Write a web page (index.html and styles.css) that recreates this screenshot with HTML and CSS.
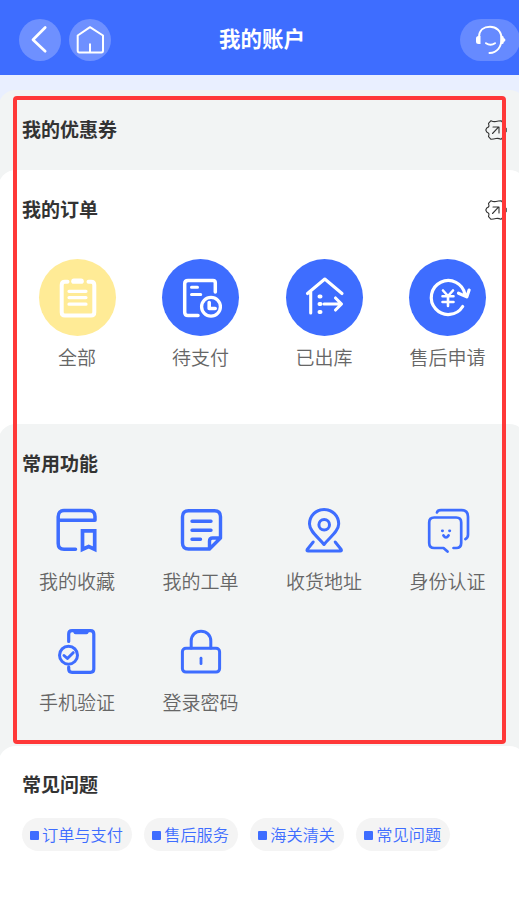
FILE: index.html
```html
<!DOCTYPE html>
<html lang="zh-CN">
<head>
<meta charset="utf-8">
<title>我的账户</title>
<link rel="stylesheet" href="styles.css">
</head>
<body>
<header class="topbar">
  <div class="nav">
    <a class="round"><svg width="42" height="42" viewBox="0 0 42 42"><path d="M26.2 8.5 14 20.8 26.2 32.2" stroke-width="2.7"/></svg></a>
    <a class="round"><svg width="42" height="42" viewBox="0 0 42 42"><path d="M8.700 16.500 21 8.200 34 16.500V31.800q0 1.600-1.600 1.600H10.300Q8.700 33.400 8.700 31.800ZM21 25.200v8" stroke-width="2"/></svg></a>
  </div>
  <h1>我的账户</h1>
  <a class="service"><svg width="60" height="42" viewBox="0 0 60 42"><path d="M19 18C19 11 24 7.800 30 7.800S41.500 12 41.500 19.500C41.500 28 37 33.500 29.500 34M26 24.200q4.500 3.200 9 0" stroke-width="2"/><path class="solid" d="M20.500 17v8h-2q-2.500 0-2.500-2.500v-3Q16 17 18.500 17ZM40.500 17v8h2q1.200 0 1.400-2.200 1.500-.3 1.500-1.800t-1.500-1.800Q43.700 17 42.500 17Z"/></svg></a>
</header>
<main>
  <section class="panel coupons">
    <div class="heading"><h2>我的优惠券</h2><svg class="more" viewBox="0 0 22 22"><path d="M4 7 3.500 4.300 6 1.700Q8.500 3 11 2.500T16 1.700L18.500 4.300 18 7 21.200 9.500V12.500L18 15 18.500 17.700 16 20.300Q13.500 19 11 19.500T6 20.300L3.500 17.700 4 15Q3.500 13.500 1.700 12.900L.8 11 1.700 9.100Q3.500 8.500 4 7ZM7.500 14.500l6-6.300M8 8h6v6"/></svg></div>
  </section>
  <section class="panel orders">
    <div class="heading"><h2>我的订单</h2><svg class="more" viewBox="0 0 22 22"><path d="M4 7 3.500 4.300 6 1.700Q8.500 3 11 2.500T16 1.700L18.500 4.300 18 7 21.200 9.500V12.500L18 15 18.500 17.700 16 20.300Q13.500 19 11 19.500T6 20.300L3.500 17.700 4 15Q3.500 13.500 1.700 12.900L.8 11 1.700 9.100Q3.500 8.500 4 7ZM7.500 14.500l6-6.300M8 8h6v6"/></svg></div>
    <div class="grid order-grid">
      <a class="item"><svg class="disc pale" viewBox="0 0 77 77"><path d="M28.500 22.800H26q-3.300 0-3.300 3.300v27.200q0 3.300 3.300 3.300h26q3.300 0 3.300-3.300V26.100q0-3.300-3.300-3.300h-2.500" stroke-width="4"/><path d="M34.800 22.200h7.400" stroke-width="5.200"/><path d="M30 32.300h17M30 38.600h17M30 45.200h17" stroke-width="3.200"/></svg><span>全部</span></a>
      <a class="item"><svg class="disc" viewBox="0 0 77 77"><path d="M36 56.500H26q-3.300 0-3.300-3.300V24.800q0-3.300 3.300-3.300h25q2.300 0 2.300 2.300V33" stroke-width="3.500"/><path d="M29.500 28.300h6M29.500 35.500h9.200" stroke-width="3"/><circle cx="49" cy="47.800" r="9.400" stroke-width="3.300"/><path d="M47.200 43.500v6h6" stroke-width="3.600"/></svg><span>待支付</span></a>
      <a class="item"><svg class="disc" viewBox="0 0 77 77"><path d="M21.500 34.500 38.800 20 56 34.500M24.700 33v21M38 45h17M49.500 39l6 6-6 6" stroke-width="3.100"/><path d="M33.500 37.500h1M33.500 45h1M33.500 53h1" stroke-width="4"/></svg><span>已出库</span></a>
      <a class="item"><svg class="disc" viewBox="0 0 77 77"><path d="M53.700 47.500A17 17 0 1 1 56 35.500M49.500 34.200l8.300 3.700 2.300-6.800" stroke-width="3.200"/><path d="m34 31.500 5 5.500 5-5.500M33.500 37.300h11M33.500 43h11M39 37v10" stroke-width="2.600"/></svg><span>售后申请</span></a>
    </div>
  </section>
  <section class="panel tools">
    <div class="heading"><h2>常用功能</h2></div>
    <div class="grid tool-grid">
      <a class="item"><svg class="line" viewBox="0 0 46 46"><path d="M21.500 42.200H10q-5.800 0-5.800-5.800V9.700Q4.200 3.600 10 3.600h25q6 0 6 6v3.600H5" stroke-width="3.500"/><path class="square" d="M28.500 23.800h12.200v18.500l-6-2.800-6.200 2.800Z" stroke-width="3.700"/></svg><span>我的收藏</span></a>
      <a class="item"><svg class="line" viewBox="0 0 46 46"><path d="M31.500 42H10.500q-6 0-6-6V9.700q0-6 6-6h26q6 0 6 6V31L31.500 42ZM31.500 41v-7q0-3 3-3H42M14 14.200h19M14 23.200h19M14 32.200h8.500" stroke-width="3.400"/></svg><span>我的工单</span></a>
      <a class="item"><svg class="line" viewBox="0 0 46 46"><path d="M23 37.500C18 31 8.500 24.500 8.500 17A14.600 14.600 0 0 1 37.700 17C37.700 24.500 28 31 23 37.500Z" stroke-width="3"/><circle cx="23.200" cy="17.700" r="5.300" stroke-width="3"/><path d="m12.200 35-6 7.500q-.8 1.500 1 1.500h32q1.800 0 1-1.500l-6-7.500" stroke-width="3"/></svg><span>收货地址</span></a>
      <a class="item"><svg class="line" viewBox="0 0 46 46"><path d="M22.500 44.500 18.500 41H9.200q-5 0-5-5V15.500q0-5 5-5h22q5 0 5 5V36q0 5-5 5h-2.700M12 5.500q.5-2.300 4-2.300h20.500q6.500 0 6.500 6.500v18q0 3-2.600 4.500M18.500 28.500q2.500 4 5 0" stroke-width="2.700"/><path d="M17.300 23.800h.3M24.500 23.800h.3" stroke-width="2.800"/></svg><span>身份认证</span></a>
      <a class="item"><svg class="line" viewBox="0 0 46 46"><path d="M14.700 13.500V6q0-3.300 3.300-3.300h18.500q3.300 0 3.300 3.300v35q0 3.300-3.300 3.300H18q-3.300 0-3.300-3.300v-2" stroke-width="3.200"/><path d="M21.500 4.300h11" stroke-width="4"/><circle cx="14.500" cy="27.200" r="9" stroke-width="3"/><path d="m10 27.500 3.400 3 5.800-5.800" stroke-width="3"/></svg><span>手机验证</span></a>
      <a class="item"><svg class="line" viewBox="0 0 46 46"><path d="M13.200 20v-7C13.200 7 17.500 3.200 23 3.200S32.800 7 32.800 13v7" stroke-width="3"/><rect x="4.400" y="20.300" width="37.200" height="23.800" rx="3.500" stroke-width="3"/><path d="M23 30.200v5.500" stroke-width="2.800"/></svg><span>登录密码</span></a>
    </div>
  </section>
  <section class="panel faq">
    <div class="heading"><h2>常见问题</h2></div>
    <div class="chips"><a class="chip">订单与支付</a><a class="chip">售后服务</a><a class="chip">海关清关</a><a class="chip">常见问题</a></div>
  </section>
</main>
<div class="outline"></div>
</body>
</html>
```
FILE: styles.css
```css
* { box-sizing: border-box; }
body {
  margin: 0;
  height: 900px;
  position: relative;
  overflow: hidden;
  background: #fff;
  color: #333;
  font-family: "Noto Sans CJK SC", sans-serif;
}
h1, h2 { margin: 0; }
svg { display: block; fill: none; stroke: currentColor; stroke-linecap: round; stroke-linejoin: round; }
.topbar {
  height: 75px;
  padding: 4px 0 0 19px;
  display: grid;
  grid-template-columns: 200px 1fr 59px;
  align-items: center;
  background: #3e6dff;
  color: #fff;
}
.nav { display: flex; gap: 8px; }
.round { width: 42px; height: 42px; border-radius: 50%; background: #6e90ff; }
.topbar h1 { margin-top: -3px; font-size: 21.5px; line-height: 30px; font-weight: 700; white-space: nowrap; }
.service { width: 60px; height: 42px; border-radius: 21px; background: #668aff; }
.solid { fill: currentColor; stroke: none; }
main { height: 825px; padding-top: 15px; background: #e9efff; overflow: hidden; }
.panel { position: relative; margin: 0 -8px 0 -2px; border-radius: 18px 18px 0 0; }
.panel + .panel { margin-top: -20px; }
.coupons { height: 100px; padding-top: 24px; background: #f2f4f4; }
.orders { height: 274px; padding-top: 24px; background: #fff; }
.tools { height: 342px; padding-top: 24px; background: #f2f4f4; }
.faq { height: 175px; padding-top: 23px; background: #fff; }
.heading { height: 30px; padding: 0 20px 0 24px; display: flex; align-items: center; justify-content: space-between; }
.heading h2 { font-size: 19px; line-height: 30px; font-weight: 700; }
.more { width: 22px; height: 22px; margin-top: 2px; stroke-width: 1.1; }
.grid { width: 494px; margin-left: 17.3px; display: grid; grid-template-columns: repeat(4, 1fr); }
.item { display: flex; flex-direction: column; align-items: center; font-size: 19px; line-height: 28px; font-weight: 350; color: #666; }
.order-grid { margin-top: 34.5px; }
.disc { width: 77px; height: 77px; margin-bottom: 7px; border-radius: 50%; background: #3e6dff; color: #fff; }
.pale { background: #ffeb96; }
.tool-grid { margin-top: 29px; grid-auto-rows: 121px; }
.line { width: 46px; height: 46px; margin-bottom: 14px; color: #3e6dff; }
.square { stroke-linejoin: miter; }
.chips { margin: 19px 0 0 24px; display: flex; gap: 12px; }
.chip { height: 33px; padding: 0 9.3px 1px 8px; display: flex; align-items: center; gap: 3px; border-radius: 17px; background: #f4f4f4; color: #3e6dff; font-size: 16.2px; line-height: 31px; font-weight: 350; white-space: nowrap; }
.chip::before { content: ""; width: 9px; height: 9px; margin-top: 3px; border-radius: 1px; background: #3e6dff; }
.outline { position: absolute; left: 13px; top: 96px; width: 493px; height: 648px; border: 4px solid #ff3838; border-radius: 4px; }
```
